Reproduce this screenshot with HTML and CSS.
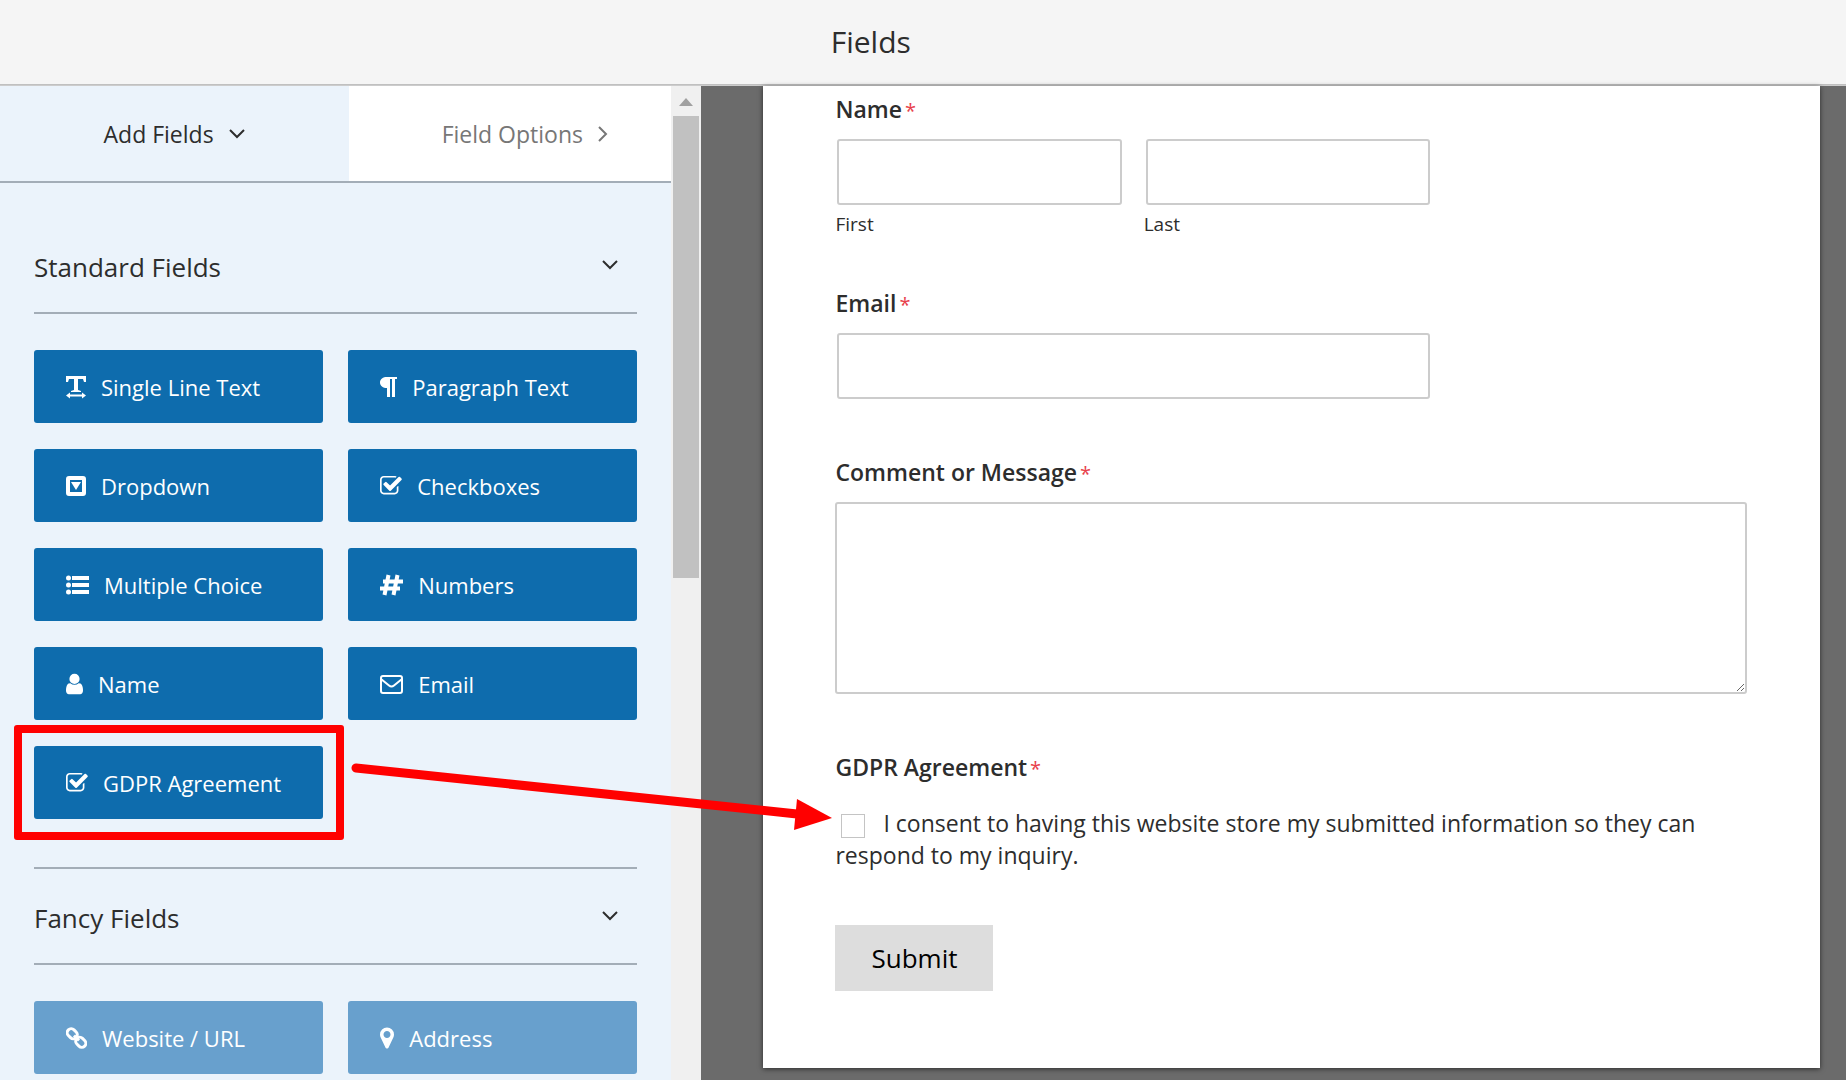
FILE: index.html
```html
<!DOCTYPE html>
<html lang="en">
    <head>
        <meta charset="utf-8">
        <title>Fields</title>
        <link rel="stylesheet" href="styles.css">
    </head>
    <body>

    <header class="topbar">
        <h1>Fields</h1>
    </header>

    <div class="builder">
        <aside class="sidebar">
            <div class="panel">
                <nav class="tabs">
                    <a href="#add-fields" class="tab active">Add Fields
                        <svg width="18" height="12" viewBox="0 0 18 12"><path class="line" d="M2 2l7 7 7-7"/></svg>
                    </a>
                    <a href="#field-options" class="tab">Field Options
                        <svg width="12" height="18" viewBox="0 0 12 18"><path class="line" d="M2 2l7 7-7 7"/></svg>
                    </a>
                </nav>

                <section class="group" id="add-fields">
                    <h2>Standard Fields
                        <svg width="18" height="12" viewBox="0 0 18 12"><path class="line" d="M2 2l7 7 7-7"/></svg>
                    </h2>
                    <div class="buttons">
                        <button class="field-button">
                            <svg width="20" height="24" viewBox="0 0 20 24"><path d="M0 1h20v6h-2l-1-3h-5v11l3 1v1H5v-1l3-1V4H3L2 7H0zM0 20.500l4-3v2h12v-2l4 3-4 3v-2H4v2z"/></svg>
                            Single Line Text
                        </button>
                        <button class="field-button">
                            <svg width="17" height="24" viewBox="0 0 17 24"><path d="M7 2h10v2h-2v18h-3V4h-2v18H7v-9C3 13 0 11 0 7.500S3 2 7 2z"/></svg>
                            Paragraph Text
                        </button>
                        <button class="field-button">
                            <svg width="20" height="24" viewBox="0 0 20 24"><path fill-rule="evenodd" d="M3 2h14a3 3 0 0 1 3 3v14a3 3 0 0 1-3 3H3a3 3 0 0 1-3-3V5a3 3 0 0 1 3-3zm1 4v12h12V6zm1 2h10l-5 8z"/></svg>
                            Dropdown
                        </button>
                        <button class="field-button">
                            <svg width="22" height="24" viewBox="64 0 1680 1792"><path d="M1472 930v318q0 119-84.500 203.500t-203.500 84.500h-832q-119 0-203.500-84.500t-84.500-203.500v-832q0-119 84.500-203.500t203.500-84.500h832q63 0 117 25 15 7 18 23 3 17-9 29l-49 49q-10 10-23 10-3 0-9-2-23-6-45-6h-832q-66 0-113 47t-47 113v832q0 66 47 113t113 47h832q66 0 113-47t47-113v-254q0-13 9-22l64-64q10-10 23-10 6 0 12 3 20 8 20 29zm231-489l-814 814q-24 24-57 24t-57-24l-430-430q-24-24-24-57t24-57l110-110q24-24 57-24t57 24l263 263 647-647q24-24 57-24t57 24l110 110q24 24 24 57t-24 57z"/></svg>
                            Checkboxes
                        </button>
                        <button class="field-button">
                            <svg width="23" height="24" viewBox="0 0 23 24"><path d="M6 3h17v4H6zM6 10h17v4H6zM6 17h17v4H6z"/><circle cx="2.500" cy="5" r="2.500"/><circle cx="2.500" cy="12" r="2.500"/><circle cx="2.500" cy="19" r="2.500"/></svg>
                            Multiple Choice
                        </button>
                        <button class="field-button">
                            <svg width="23" height="24" viewBox="0 0 23 24"><path class="thick" d="M8.500 2l-4 20M17.500 2l-4 20M3 8.500h20M0 15.500h20"/></svg>
                            Numbers
                        </button>
                        <button class="field-button">
                            <svg width="17" height="24" viewBox="256 64 1280 1664"><path d="M1536 1399q0 109-62.500 187t-150.500 78h-854q-88 0-150.500-78t-62.500-187q0-85 8.500-160.500t31.500-152 58.500-131 94-89 134.500-34.500q131 128 313 128t313-128q76 0 134.500 34.500t94 89 58.500 131 31.500 152 8.500 160.500zm-256-887q0 159-112.500 271.500t-271.500 112.500-271.500-112.500-112.500-271.500 112.500-271.500 271.500-112.500 271.500 112.500 112.500 271.500z"/></svg>
                            Name
                        </button>
                        <button class="field-button">
                            <svg width="23" height="24" viewBox="0 0 23 24"><path class="line" d="M3 4h17a2 2 0 0 1 2 2v13a2 2 0 0 1-2 2H3a2 2 0 0 1-2-2V6a2 2 0 0 1 2-2zM1 7l8 6.500q2.500 2 5 0L22 7"/></svg>
                            Email
                        </button>
                        <button class="field-button highlighted">
                            <svg width="22" height="24" viewBox="64 0 1680 1792"><path d="M1472 930v318q0 119-84.500 203.500t-203.500 84.500h-832q-119 0-203.500-84.500t-84.500-203.500v-832q0-119 84.500-203.500t203.500-84.500h832q63 0 117 25 15 7 18 23 3 17-9 29l-49 49q-10 10-23 10-3 0-9-2-23-6-45-6h-832q-66 0-113 47t-47 113v832q0 66 47 113t113 47h832q66 0 113-47t47-113v-254q0-13 9-22l64-64q10-10 23-10 6 0 12 3 20 8 20 29zm231-489l-814 814q-24 24-57 24t-57-24l-430-430q-24-24-24-57t24-57l110-110q24-24 57-24t57 24l263 263 647-647q24-24 57-24t57 24l110 110q24 24 24 57t-24 57z"/></svg>
                            GDPR Agreement
                        </button>
                    </div>
                </section>

                <section class="group">
                    <h2>Fancy Fields
                        <svg width="18" height="12" viewBox="0 0 18 12"><path class="line" d="M2 2l7 7 7-7"/></svg>
                    </h2>
                    <div class="buttons">
                        <button class="field-button pro">
                            <svg width="21" height="24" viewBox="0 0 21 24"><g transform="rotate(45 10.500 12)"><rect class="ring" x="-1" y="8" width="11" height="8" rx="4"/><rect class="ring" x="11" y="8" width="11" height="8" rx="4"/><path class="ring" d="M7 12h7"/></g></svg>
                            Website / URL
                        </button>
                        <button class="field-button pro">
                            <svg width="14" height="24" viewBox="384 64 1024 1664"><path d="M1152 640q0-106-75-181t-181-75-181 75-75 181 75 181 181 75 181-75 75-181zm256 0q0 109-33 179l-364 774q-16 33-47.500 52t-67.500 19-67.500-19-46.500-52l-365-774q-33-70-33-179 0-212 150-362t362-150 362 150 150 362z"/></svg>
                            Address
                        </button>
                    </div>
                </section>
            </div>

            <div class="scrollbar">
                <svg width="14" height="8" viewBox="0 0 14 8"><path d="M0 8l7-8 7 8z"/></svg>
                <div class="thumb"></div>
            </div>
        </aside>

        <main class="preview">
            <form class="form">
                <fieldset class="field names">
                    <legend class="label">Name<span class="required">*</span></legend>
                    <div class="columns">
                        <div>
                            <input type="text" class="text" id="first">
                            <label class="sublabel" for="first">First</label>
                        </div>
                        <div>
                            <input type="text" class="text" id="last">
                            <label class="sublabel" for="last">Last</label>
                        </div>
                    </div>
                </fieldset>

                <div class="field">
                    <label class="label" for="email">Email<span class="required">*</span></label>
                    <div class="medium">
                        <input type="email" class="text" id="email">
                    </div>
                </div>

                <div class="field">
                    <label class="label" for="message">Comment or Message<span class="required">*</span></label>
                    <textarea id="message"></textarea>
                </div>

                <fieldset class="field agreement">
                    <legend class="label">GDPR Agreement<span class="required">*</span></legend>
                    <div class="consent">
                        <input type="checkbox" id="consent">
                        <label for="consent">I consent to having this website store my submitted information so they can respond to my inquiry.</label>
                    </div>
                </fieldset>

                <button type="button" class="submit">Submit</button>
            </form>
        </main>
    </div>

    <!-- arrow from the GDPR button to its checkbox -->
    <svg class="arrow" width="490" height="80" viewBox="0 0 490 80">
        <path class="shaft" d="M9 18L450 64"/>
        <path class="head" d="M450 49l35 19-38 12z"/>
    </svg>

    </body>
</html>
```
FILE: styles.css
```css
* {
    box-sizing: border-box;
}
body {
    margin: 0;
    height: 100vh;
    display: flex;
    flex-direction: column;
    overflow: hidden;
    position: relative;
    font-family: "Open Sans", "Noto Sans", sans-serif;
    font-size: 23px;
    color: #2d2d2d;
}
button, input, textarea {
    font: inherit;
}
svg {
    flex: none;
    fill: currentColor;
}
.line {
    fill: none;
    stroke: currentColor;
    stroke-width: 2;
}
.thick {
    fill: none;
    stroke: currentColor;
    stroke-width: 4;
}
.ring {
    fill: none;
    stroke: currentColor;
    stroke-width: 3;
}

.topbar {
    flex: none;
    padding-left: 45%;
    background-color: #f5f5f5;
    border-bottom: 1px solid #c0c0c0;
}
.topbar h1 {
    margin: 0;
    font-size: 30px;
    font-weight: 400;
    line-height: 84px;
}

.builder {
    flex: 1;
    min-height: 0;
    display: flex;
    border-top: 1px solid #ccc;
}
.sidebar {
    width: 38%;
    display: flex;
    background-color: #ebf3fb;
}
.panel {
    flex: 1;
    overflow: hidden;
}
.tabs {
    display: flex;
    border-bottom: 2px solid #a3adb7;
}
.tab {
    width: 48%;
    height: 95px;
    padding-left: 30px;
    display: flex;
    align-items: center;
    justify-content: center;
    gap: 14px;
    background-color: white;
    color: #777;
    text-decoration: none;
}
.tab.active {
    width: 52%;
    padding-left: 0;
    background-color: #ebf3fb;
    color: #2d2d2d;
}

.group {
    margin: 0 34px;
    padding-bottom: 48px;
}
.group + .group {
    border-top: 2px solid #a3adb7;
}
.group h2 {
    margin: 0 0 36px;
    padding: 28px 18px 24px 0;
    display: flex;
    align-items: center;
    justify-content: space-between;
    border-bottom: 2px solid #a3adb7;
    font-size: 26px;
    font-weight: 400;
    line-height: 42px;
}
.group h2 svg {
    margin-bottom: 5px;
}
.tabs + .group h2 {
    padding-top: 63px;
}
.buttons {
    display: grid;
    grid-template-columns: 1fr 1fr;
    gap: 26px 25px;
}
.field-button {
    position: relative;
    height: 73px;
    padding: 0 32px;
    display: flex;
    align-items: center;
    gap: 15px;
    background-color: #0e6cad;
    border: none;
    border-radius: 3px;
    color: white;
    font-size: 22px;
    white-space: nowrap;
}
.field-button.pro {
    background-color: #68a0cd;
}
.highlighted::after {
    content: "";
    position: absolute;
    inset: -21px -21px -21px -20px;
    border: 8px solid red;
    border-radius: 3px;
}

.scrollbar {
    width: 30px;
    padding: 12px 2px 0;
    display: flex;
    flex-direction: column;
    align-items: center;
    gap: 10px;
    background-color: #f0f0f0;
    color: #a0a0a0;
}
.thumb {
    width: 26px;
    height: 47%;
    background-color: #c1c1c1;
}

.preview {
    flex: 1;
    padding: 0 26px 12px 62px;
    display: flex;
    background-color: #6b6b6b;
}
.form {
    flex: 1;
    padding: 7px 73px 0 72px;
    background-color: white;
    box-shadow: 0 1px 5px rgba(0, 0, 0, 0.6);
}
.field {
    margin: 0 0 57px;
    padding: 0;
    border: none;
}
.field.names {
    margin-bottom: 49px;
}
.field.agreement {
    margin-bottom: 54px;
}
.label {
    display: block;
    margin-bottom: 14px;
    padding: 0;
    font-weight: 600;
    line-height: 32px;
}
.required {
    margin-left: 3px;
    color: #e8414b;
    font-size: 20px;
    font-weight: 400;
    line-height: 20px;
}
.columns {
    display: grid;
    grid-template-columns: 1fr 1fr;
    gap: 24px;
}
.columns, .medium {
    width: 65%;
    margin-left: 2px;
}
.text {
    display: block;
    width: 100%;
    height: 66px;
    padding: 0 12px;
    background-color: white;
    border: 2px solid #ccc;
    border-radius: 3px;
}
.sublabel {
    display: block;
    margin: 5px 0 0 -2px;
    font-size: 19px;
    line-height: 28px;
}
textarea {
    display: block;
    width: 100%;
    height: 192px;
    padding: 12px;
    border: 2px solid #ccc;
    border-radius: 3px;
    resize: both;
}
.consent {
    padding-top: 10px;
    line-height: 32px;
}
.consent input {
    appearance: none;
    width: 24px;
    height: 24px;
    margin: 0 12px 0 6px;
    border: 1px solid #c4c4c4;
    vertical-align: -6px;
}
.submit {
    height: 66px;
    padding: 0 36px;
    background-color: #ddd;
    border: none;
    color: black;
    font-size: 26px;
}

.arrow {
    position: absolute;
    left: 347px;
    top: 750px;
}
.shaft {
    stroke: red;
    stroke-width: 9;
    stroke-linecap: round;
}
.head {
    fill: red;
}
```
